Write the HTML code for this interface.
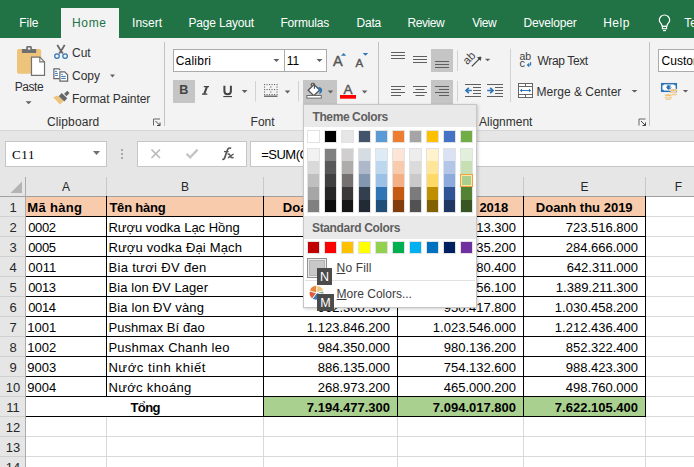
<!DOCTYPE html><html><head><meta charset="utf-8"><style>
*{margin:0;padding:0;box-sizing:border-box}
html,body{width:694px;height:467px;overflow:hidden}
body{position:relative;font-family:"Liberation Sans",sans-serif;background:#fff}
.a{position:absolute}
.t{position:absolute;white-space:nowrap;font-size:12px;line-height:14px;color:#262626}
.c{position:absolute;white-space:nowrap;font-size:13px;line-height:15px;color:#000}
svg{position:absolute;left:0;top:0;overflow:visible}
</style></head><body>

<div class="a" style="left:0px;top:0px;width:694px;height:38px;background:#217346;"></div>
<div class="a" style="left:61px;top:8px;width:58px;height:30px;background:#f3f3f3;"></div>
<div class="t" style="left:19.2px;top:16.0px;color:#fff;letter-spacing:0.00px;">File</div>
<div class="t" style="left:72.1px;top:16.0px;color:#217346;letter-spacing:0.60px;">Home</div>
<div class="t" style="left:132.1px;top:16.0px;color:#fff;letter-spacing:0.00px;">Insert</div>
<div class="t" style="left:188.4px;top:16.0px;color:#fff;letter-spacing:-0.17px;">Page Layout</div>
<div class="t" style="left:280.4px;top:16.0px;color:#fff;letter-spacing:-0.16px;">Formulas</div>
<div class="t" style="left:356.6px;top:16.0px;color:#fff;letter-spacing:-0.27px;">Data</div>
<div class="t" style="left:407.5px;top:16.0px;color:#fff;letter-spacing:-0.44px;">Review</div>
<div class="t" style="left:472.3px;top:16.0px;color:#fff;letter-spacing:-0.50px;">View</div>
<div class="t" style="left:523.5px;top:16.0px;color:#fff;letter-spacing:-0.19px;">Developer</div>
<div class="t" style="left:603.2px;top:16.0px;color:#fff;letter-spacing:0.50px;">Help</div>
<div class="t" style="left:684.2px;top:16.0px;color:#fff;letter-spacing:0.00px;">Tell me</div>
<div class="a" style="left:0px;top:38px;width:694px;height:92px;background:#f3f3f3;"></div>
<div class="a" style="left:0px;top:130px;width:694px;height:1px;background:#d6d6d6;"></div>
<div class="a" style="left:0px;top:131px;width:694px;height:46px;background:#e6e6e6;"></div>
<div class="a" style="left:164px;top:42px;width:1px;height:84px;background:#c2c2c2;"></div>
<div class="a" style="left:378px;top:42px;width:1px;height:84px;background:#c2c2c2;"></div>
<div class="a" style="left:649px;top:42px;width:1px;height:84px;background:#c2c2c2;"></div>
<div class="t" style="left:14.7px;top:80.0px;color:#303030;letter-spacing:-0.42px;">Paste</div>
<div class="t" style="left:72.0px;top:45.5px;color:#303030;letter-spacing:0.00px;">Cut</div>
<div class="t" style="left:72.0px;top:69.0px;color:#303030;letter-spacing:0.00px;">Copy</div>
<div class="t" style="left:71.9px;top:91.5px;color:#303030;letter-spacing:-0.07px;">Format Painter</div>
<div class="t" style="left:47.0px;top:114.5px;color:#303030;letter-spacing:0.11px;">Clipboard</div>
<div class="t" style="left:250.6px;top:114.5px;color:#303030;letter-spacing:0.00px;">Font</div>
<div class="t" style="left:479.1px;top:114.8px;color:#303030;letter-spacing:0.00px;">Alignment</div>
<div class="t" style="left:537.6px;top:53.8px;color:#303030;letter-spacing:-0.38px;">Wrap Text</div>
<div class="t" style="left:536.6px;top:85.0px;color:#303030;letter-spacing:0.00px;">Merge &amp; Center</div>
<div class="a" style="left:173px;top:49px;width:112px;height:23px;background:#fff;border:1px solid #ababab"></div>
<div class="a" style="left:284px;top:49px;width:43px;height:23px;background:#fff;border:1px solid #ababab"></div>
<div class="t" style="left:175.7px;top:53.7px;color:#000;letter-spacing:0.22px;">Calibri</div>
<div class="t" style="left:286.7px;top:53.7px;color:#000;letter-spacing:0.00px;">11</div>
<div class="a" style="left:658px;top:49px;width:60px;height:23px;background:#fff;border:1px solid #ababab"></div>
<div class="t" style="left:661.6px;top:53.7px;color:#000;letter-spacing:0.00px;">Custom</div>
<div class="a" style="left:173px;top:80px;width:22px;height:23px;background:#c5c5c5;"></div>
<div class="a" style="left:303px;top:80px;width:34px;height:24px;background:#c5c5c5;"></div>
<div class="a" style="left:431px;top:49px;width:22px;height:23px;background:#c5c5c5;"></div>
<div class="a" style="left:431px;top:80px;width:22px;height:24px;background:#c5c5c5;"></div>
<div class="a" style="left:179.2px;top:83.6px;font-size:12.6px;line-height:13px;font-weight:700;color:#444">B</div>
<svg width="694" height="467"><path d="M25.6 101.2h6l-3.0 3z" fill="#606060"/><path d="M110.0 74.5h5l-2.5 3z" fill="#606060"/><path d="M273.4 59h6l-3.0 3z" fill="#606060"/><path d="M316.5 59h6l-3.0 3z" fill="#606060"/><path d="M241.7 90.1h5.8l-2.9 2.9z" fill="#606060"/><path d="M284.75 90.5h5.5l-2.75 3z" fill="#606060"/><path d="M327.75 90.5h5.5l-2.75 3z" fill="#606060"/><path d="M361.85 90.5h5.5l-2.75 3z" fill="#606060"/><path d="M484.85 58.7h5.5l-2.75 2.5z" fill="#606060"/><path d="M631.5 90h6l-3.0 2.5z" fill="#606060"/><path d="M682.75 90h5.5l-2.75 2.5z" fill="#606060"/><rect x="17" y="49" width="24.2" height="24.8" rx="1.8" fill="#eec37c"/><rect x="21.9" y="48.9" width="14.3" height="4.2" rx="0.6" fill="#6f6f6f"/><rect x="26.2" y="46" width="5.7" height="4.8" rx="1.4" fill="#6f6f6f"/><rect x="27.9" y="47.6" width="2.4" height="2" fill="#f3f3f3"/><path d="M31.5 57.2 H39.8 L44.5 61.9 V75.3 H31.5 Z" fill="#fff" stroke="#727272" stroke-width="1.2"/><path d="M39.8 57.2 V61.9 H44.5" fill="none" stroke="#727272" stroke-width="1.1"/><path d="M57.3 44.8 Q59 48 62.8 53.6 M64.7 44.8 Q63 48 59.2 53.6" stroke="#666" stroke-width="1.8" fill="none"/><circle cx="57" cy="56.1" r="2.3" fill="none" stroke="#2e75b6" stroke-width="1.2"/><circle cx="65.1" cy="56.1" r="2.3" fill="none" stroke="#2e75b6" stroke-width="1.2"/><path d="M59.5 78.7 H53.9 V68.9 H59 L60.2 70" fill="#fff" stroke="#666" stroke-width="1.2"/><path d="M59.9 71.9 H64.7 L67.6 74.8 V81.1 H59.9 Z" fill="#fff" stroke="#666" stroke-width="1.2"/><path d="M55.1 71.4h1.8 M55.1 73.4h2.8 M55.1 75.4h2.8 M61.2 74.3h1.6 M61.2 76.4h4.6 M61.2 78.4h4.6" stroke="#2e75b6" stroke-width="1"/><path d="M53.1 97.2 L57.6 95.5 L63.8 100.8 L60 104.5 Z" fill="#eec37c"/><path d="M60.2 94.6 L65.8 99.8" stroke="#666" stroke-width="4.3"/><path d="M65.3 95 L68.4 91.9" stroke="#666" stroke-width="3.3"/><path d="M341 55.7 L343.6 53 L346.2 55.7 Z" fill="#2e75b6"/><path d="M362.7 53 H368.2 L365.45 55.7 Z" fill="#2e75b6"/><path d="M207 86.6 L204.2 94.2" stroke="#444" stroke-width="2"/><path d="M203.8 86.6 H209 M202 94.2 H207.3" stroke="#444" stroke-width="1.3"/><path d="M224.4 85.8 V91 Q224.4 94.2 227.65 94.2 Q230.9 94.2 230.9 91 V85.8" fill="none" stroke="#444" stroke-width="2"/><rect x="223.3" y="96" width="8.7" height="1.1" fill="#444"/><path d="M255.5 81 V101.5 M298.5 81 V101.5" stroke="#d2d2d2" stroke-width="1"/><rect x="264" y="84" width="1.1" height="1.1" fill="#666"/><rect x="266.5" y="84" width="1.1" height="1.1" fill="#666"/><rect x="269" y="84" width="1.1" height="1.1" fill="#666"/><rect x="271.5" y="84" width="1.1" height="1.1" fill="#666"/><rect x="274" y="84" width="1.1" height="1.1" fill="#666"/><rect x="276.5" y="84" width="1.1" height="1.1" fill="#666"/><rect x="264" y="86.5" width="1.1" height="1.1" fill="#666"/><rect x="270.2" y="86.5" width="1.1" height="1.1" fill="#666"/><rect x="276.5" y="86.5" width="1.1" height="1.1" fill="#666"/><rect x="264" y="89" width="1.1" height="1.1" fill="#666"/><rect x="266.5" y="89" width="1.1" height="1.1" fill="#666"/><rect x="269" y="89" width="1.1" height="1.1" fill="#666"/><rect x="271.5" y="89" width="1.1" height="1.1" fill="#666"/><rect x="274" y="89" width="1.1" height="1.1" fill="#666"/><rect x="276.5" y="89" width="1.1" height="1.1" fill="#666"/><rect x="264" y="91.5" width="1.1" height="1.1" fill="#666"/><rect x="270.2" y="91.5" width="1.1" height="1.1" fill="#666"/><rect x="276.5" y="91.5" width="1.1" height="1.1" fill="#666"/><rect x="264" y="94" width="1.1" height="1.1" fill="#666"/><rect x="266.5" y="94" width="1.1" height="1.1" fill="#666"/><rect x="269" y="94" width="1.1" height="1.1" fill="#666"/><rect x="271.5" y="94" width="1.1" height="1.1" fill="#666"/><rect x="274" y="94" width="1.1" height="1.1" fill="#666"/><rect x="276.5" y="94" width="1.1" height="1.1" fill="#666"/><rect x="264" y="95.6" width="13.5" height="1.2" fill="#505050"/><path d="M308.2 90.2 L314 84.6 L319.7 90 L313.8 95.6 Z" fill="#fff" stroke="#505050" stroke-width="1.3"/><path d="M311.3 86 V84.2 Q311.3 83.2 312.3 83.2 H313.4 Q314.4 83.2 314.4 84.2 V88.8" fill="none" stroke="#505050" stroke-width="1.1"/><path d="M318.3 87.1 Q322.6 87.4 322.1 91 Q321.6 93.2 319 94.4 Q320.2 91.2 318.6 89.6 Z" fill="#2e75b6"/><rect x="306.9" y="95.5" width="14.4" height="2.6" fill="#fff" stroke="#6a6a6a" stroke-width="1"/><rect x="340" y="95" width="16" height="3.7" fill="#ff0000"/><path d="M391 52.5 H405" stroke="#5e5e5e" stroke-width="1"/><path d="M391 55.5 H405" stroke="#5e5e5e" stroke-width="1"/><path d="M391 58.5 H405" stroke="#5e5e5e" stroke-width="1"/><path d="M413 56.5 H427" stroke="#5e5e5e" stroke-width="1"/><path d="M413 59.5 H427" stroke="#5e5e5e" stroke-width="1"/><path d="M413 62.5 H427" stroke="#5e5e5e" stroke-width="1"/><path d="M435 61.5 H449" stroke="#5e5e5e" stroke-width="1"/><path d="M435 64.5 H449" stroke="#5e5e5e" stroke-width="1"/><path d="M435 67.5 H449" stroke="#5e5e5e" stroke-width="1"/><path d="M391 86.5 H405" stroke="#5e5e5e" stroke-width="1"/><path d="M391 89.5 H401" stroke="#5e5e5e" stroke-width="1"/><path d="M391 92.5 H405" stroke="#5e5e5e" stroke-width="1"/><path d="M391 95.5 H401" stroke="#5e5e5e" stroke-width="1"/><path d="M413 86.5 H427" stroke="#5e5e5e" stroke-width="1"/><path d="M415.5 89.5 H424.5" stroke="#5e5e5e" stroke-width="1"/><path d="M413 92.5 H427" stroke="#5e5e5e" stroke-width="1"/><path d="M415.5 95.5 H424.5" stroke="#5e5e5e" stroke-width="1"/><path d="M435 86.5 H449" stroke="#5e5e5e" stroke-width="1"/><path d="M439 89.5 H449" stroke="#5e5e5e" stroke-width="1"/><path d="M435 92.5 H449" stroke="#5e5e5e" stroke-width="1"/><path d="M439 95.5 H449" stroke="#5e5e5e" stroke-width="1"/><path d="M457.5 50.5 V71 M457.5 81 V101.5" stroke="#d2d2d2" stroke-width="1"/><g transform="translate(467.2 65.2) rotate(-45)"><text x="0" y="0" font-family="Liberation Sans" font-size="11.5" fill="#444">ab</text></g><path d="M471.8 66.3 L480.3 57.8" stroke="#444" stroke-width="1.2" fill="none"/><path d="M481 57 L477.6 57.6 L480.4 60.4 Z" fill="#444" stroke="#444" stroke-width="0.8"/><rect x="465" y="84" width="16" height="1" fill="#5e5e5e"/><rect x="465" y="96" width="16" height="1" fill="#5e5e5e"/><rect x="473" y="87" width="8" height="1" fill="#5e5e5e"/><rect x="473" y="90" width="8" height="1" fill="#5e5e5e"/><rect x="473" y="93" width="8" height="1" fill="#5e5e5e"/><rect x="487" y="84" width="16" height="1" fill="#5e5e5e"/><rect x="487" y="96" width="16" height="1" fill="#5e5e5e"/><rect x="495" y="87" width="8" height="1" fill="#5e5e5e"/><rect x="495" y="90" width="8" height="1" fill="#5e5e5e"/><rect x="495" y="93" width="8" height="1" fill="#5e5e5e"/><path d="M471.8 90.5 H466.5 M468.8 87.8 L466 90.5 L468.8 93.2" stroke="#2e75b6" stroke-width="1.7" fill="none"/><path d="M487.2 90.5 H492.6 M490.2 87.8 L493 90.5 L490.2 93.2" stroke="#2e75b6" stroke-width="1.7" fill="none"/><path d="M510.5 48.5 V102" stroke="#d2d2d2" stroke-width="1"/><text x="519.6" y="59.6" font-family="Liberation Sans" font-size="10.5" letter-spacing="-0.3" fill="#404040">ab</text><text x="519.6" y="67" font-family="Liberation Sans" font-size="11" fill="#404040">c</text><path d="M530.6 62 V65 H527.8 M529.2 63.4 L527.5 65 L529.2 66.6" stroke="#2e75b6" stroke-width="1.1" fill="none"/><rect x="518.5" y="83.5" width="14" height="14" fill="#fff" stroke="#666"/><path d="M518.5 86.5 H532.5 M518.5 94.5 H532.5 M525.5 83.5 V86.5 M525.5 94.5 V97.5" stroke="#666"/><path d="M520.5 90.5 H530.5 M522 89 L520.3 90.5 L522 92 M529 89 L530.7 90.5 L529 92" stroke="#2e75b6" stroke-width="1" fill="none"/><path d="M153.5 125.5 V119.0 H160" stroke="#666" fill="none"/><path d="M155.5 121.0 L160 125.5 M160 122.5 V125.5 H157" stroke="#444" fill="none"/><path d="M639.0 125.5 V119.0 H645.5" stroke="#666" fill="none"/><path d="M641.0 121.0 L645.5 125.5 M645.5 122.5 V125.5 H642.5" stroke="#444" fill="none"/><rect x="661.7" y="83.7" width="14.6" height="7.6" fill="#fff" stroke="#2e75b6" stroke-width="1.5"/><path d="M661 83 h2.8 v2.3 h-2.8z M674.2 83 h2.8 v2.3 h-2.8z M661 89.7 h2.8 v2.3 h-2.8z" fill="#2e75b6"/><circle cx="668.9" cy="87.3" r="2.4" fill="#2e75b6"/><path d="M669.6 85.6 Q671 86.6 670.2 88.2" stroke="#fff" stroke-width="0.7" fill="none"/><ellipse cx="673.5" cy="90.2" rx="3.8" ry="1.5" fill="#eec37c" stroke="#f3f3f3" stroke-width="0.7"/><path d="M670 92.4 Q673.5 93.6 677 92.4 M671 94.4 Q674 95.6 677 94.4" stroke="#eec37c" stroke-width="1" fill="none"/><ellipse cx="668.3" cy="95.2" rx="3.8" ry="1.5" fill="#eec37c" stroke="#f3f3f3" stroke-width="0.7"/><path d="M664.8 97.4 Q668.3 98.6 671.8 97.4 M665.5 99 Q668.3 100 671.2 99" stroke="#eec37c" stroke-width="1" fill="none"/><path d="M662.3 26.3 L661.3 23.9 Q659.3 22 659.3 20.2 A5.2 5.2 0 0 1 669.7 20.2 Q669.7 22 667.7 23.9 L666.7 26.3 Z" fill="none" stroke="#fff" stroke-width="1.2"/><rect x="662.4" y="26.4" width="4.2" height="2.3" fill="none" stroke="#fff" stroke-width="1.1"/><path d="M663 30.6 H666" stroke="#fff" stroke-width="1.1"/></svg>
<div class="a" style="left:333px;top:53px;font-size:14.5px;line-height:16px;color:#555;-webkit-text-stroke:0.4px #555">A</div>
<div class="a" style="left:355.5px;top:57px;font-size:11.5px;line-height:13px;color:#555;-webkit-text-stroke:0.4px #555">A</div>
<div class="a" style="left:343.5px;top:82px;font-size:13.5px;line-height:15px;color:#555;-webkit-text-stroke:0.4px #555">A</div>
<div class="a" style="left:5px;top:141px;width:102px;height:26px;background:#fff;border:1px solid #c6c6c6"></div>
<div class="a" style="left:12px;top:147px;font-family:'Liberation Serif';font-size:13px;letter-spacing:0.6px;line-height:15px;color:#000;white-space:nowrap">C11</div>
<div class="a" style="left:137px;top:141px;width:110px;height:26px;background:#fff;border:1px solid #c6c6c6"></div>
<div class="a" style="left:250px;top:141px;width:460px;height:26px;background:#fff;border:1px solid #c6c6c6"></div>
<svg width="694" height="467"><path d="M93 151 H100 L96.5 155 Z" fill="#6f6f6f"/><rect x="121" y="149" width="2" height="2" fill="#a8a8a8"/><rect x="121" y="153" width="2" height="2" fill="#a8a8a8"/><rect x="121" y="157" width="2" height="2" fill="#a8a8a8"/><path d="M151.5 149.5 L160 158 M160 149.5 L151.5 158" stroke="#b8b8b8" stroke-width="1.6"/><path d="M186.5 153.8 L190.2 157.4 L197.6 149.6" stroke="#c4c4c4" stroke-width="2.3" fill="none"/></svg>
<svg width="694" height="467"><path d="M222.3 159.2 Q224.3 160 225.3 156 L227.3 150.2 Q228.3 147.2 231.2 148.3" stroke="#555" stroke-width="1.7" fill="none"/><path d="M224 151.6 H228.6" stroke="#555" stroke-width="1.3"/><path d="M227.6 154.3 Q229 153.4 229.8 154.8 L230.8 157 Q231.8 158.3 233.6 157.4 M233.6 154 L228 157.8" stroke="#555" stroke-width="1.4" fill="none"/></svg>
<div class="c" style="left:261.2px;top:146.6px;color:#000;letter-spacing:-0.5px">=SUM(C2:C10)</div>
<div class="a" style="left:0px;top:177px;width:694px;height:20px;background:#e6e6e6;"></div>
<div class="a" style="left:0px;top:196px;width:694px;height:1px;background:#a0a0a0;"></div>
<div class="a" style="left:0px;top:197px;width:25px;height:270px;background:#e6e6e6;"></div>
<div class="a" style="left:25px;top:177px;width:1px;height:290px;background:#ababab;"></div>
<div class="a" style="left:106px;top:177px;width:1px;height:19px;background:#c8c8c8;"></div>
<div class="a" style="left:263px;top:177px;width:1px;height:19px;background:#c8c8c8;"></div>
<div class="a" style="left:397px;top:177px;width:1px;height:19px;background:#c8c8c8;"></div>
<div class="a" style="left:523px;top:177px;width:1px;height:19px;background:#c8c8c8;"></div>
<div class="a" style="left:645px;top:177px;width:1px;height:19px;background:#c8c8c8;"></div>
<svg width="694" height="467"><path d="M10.5 193 L22 181.5 V193 Z" fill="#b4b4b4"/></svg>
<div class="t" style="left:36.0px;width:60px;text-align:center;top:180px;font-size:12px;color:#262626">A</div>
<div class="t" style="left:155.0px;width:60px;text-align:center;top:180px;font-size:12px;color:#262626">B</div>
<div class="t" style="left:300.5px;width:60px;text-align:center;top:180px;font-size:12px;color:#262626">C</div>
<div class="t" style="left:430.5px;width:60px;text-align:center;top:180px;font-size:12px;color:#262626">D</div>
<div class="t" style="left:554.5px;width:60px;text-align:center;top:180px;font-size:12px;color:#262626">E</div>
<div class="t" style="left:648.5px;width:60px;text-align:center;top:180px;font-size:12px;color:#262626">F</div>
<div class="a" style="left:0px;top:216px;width:25px;height:1px;background:#d0d0d0;"></div>
<div class="c" style="left:0;width:26px;text-align:center;top:200px;color:#262626">1</div>
<div class="a" style="left:0px;top:236px;width:25px;height:1px;background:#d0d0d0;"></div>
<div class="c" style="left:0;width:26px;text-align:center;top:220px;color:#262626">2</div>
<div class="a" style="left:0px;top:256px;width:25px;height:1px;background:#d0d0d0;"></div>
<div class="c" style="left:0;width:26px;text-align:center;top:240px;color:#262626">3</div>
<div class="a" style="left:0px;top:276px;width:25px;height:1px;background:#d0d0d0;"></div>
<div class="c" style="left:0;width:26px;text-align:center;top:260px;color:#262626">4</div>
<div class="a" style="left:0px;top:296px;width:25px;height:1px;background:#d0d0d0;"></div>
<div class="c" style="left:0;width:26px;text-align:center;top:280px;color:#262626">5</div>
<div class="a" style="left:0px;top:316px;width:25px;height:1px;background:#d0d0d0;"></div>
<div class="c" style="left:0;width:26px;text-align:center;top:300px;color:#262626">6</div>
<div class="a" style="left:0px;top:336px;width:25px;height:1px;background:#d0d0d0;"></div>
<div class="c" style="left:0;width:26px;text-align:center;top:320px;color:#262626">7</div>
<div class="a" style="left:0px;top:356px;width:25px;height:1px;background:#d0d0d0;"></div>
<div class="c" style="left:0;width:26px;text-align:center;top:340px;color:#262626">8</div>
<div class="a" style="left:0px;top:376px;width:25px;height:1px;background:#d0d0d0;"></div>
<div class="c" style="left:0;width:26px;text-align:center;top:360px;color:#262626">9</div>
<div class="a" style="left:0px;top:396px;width:25px;height:1px;background:#d0d0d0;"></div>
<div class="c" style="left:0;width:26px;text-align:center;top:380px;color:#262626">10</div>
<div class="a" style="left:0px;top:416px;width:25px;height:1px;background:#d0d0d0;"></div>
<div class="c" style="left:0;width:26px;text-align:center;top:400px;color:#262626">11</div>
<div class="a" style="left:0px;top:436px;width:25px;height:1px;background:#d0d0d0;"></div>
<div class="c" style="left:0;width:26px;text-align:center;top:420px;color:#262626">12</div>
<div class="a" style="left:0px;top:456px;width:25px;height:1px;background:#d0d0d0;"></div>
<div class="c" style="left:0;width:26px;text-align:center;top:440px;color:#262626">13</div>
<div class="a" style="left:0px;top:476px;width:25px;height:1px;background:#d0d0d0;"></div>
<div class="c" style="left:0;width:26px;text-align:center;top:460px;color:#262626">14</div>
<div class="a" style="left:26px;top:197px;width:619px;height:19px;background:#f8cbad;"></div>
<div class="a" style="left:264px;top:397px;width:381px;height:19px;background:#a9d08e;"></div>
<div class="a" style="left:106px;top:417px;width:1px;height:50px;background:#d9d9d9;"></div>
<div class="a" style="left:263px;top:417px;width:1px;height:50px;background:#d9d9d9;"></div>
<div class="a" style="left:397px;top:417px;width:1px;height:50px;background:#d9d9d9;"></div>
<div class="a" style="left:523px;top:417px;width:1px;height:50px;background:#d9d9d9;"></div>
<div class="a" style="left:645px;top:417px;width:1px;height:50px;background:#d9d9d9;"></div>
<div class="a" style="left:646px;top:216px;width:48px;height:1px;background:#d9d9d9;"></div>
<div class="a" style="left:646px;top:236px;width:48px;height:1px;background:#d9d9d9;"></div>
<div class="a" style="left:646px;top:256px;width:48px;height:1px;background:#d9d9d9;"></div>
<div class="a" style="left:646px;top:276px;width:48px;height:1px;background:#d9d9d9;"></div>
<div class="a" style="left:646px;top:296px;width:48px;height:1px;background:#d9d9d9;"></div>
<div class="a" style="left:646px;top:316px;width:48px;height:1px;background:#d9d9d9;"></div>
<div class="a" style="left:646px;top:336px;width:48px;height:1px;background:#d9d9d9;"></div>
<div class="a" style="left:646px;top:356px;width:48px;height:1px;background:#d9d9d9;"></div>
<div class="a" style="left:646px;top:376px;width:48px;height:1px;background:#d9d9d9;"></div>
<div class="a" style="left:646px;top:396px;width:48px;height:1px;background:#d9d9d9;"></div>
<div class="a" style="left:646px;top:416px;width:48px;height:1px;background:#d9d9d9;"></div>
<div class="a" style="left:26px;top:436px;width:668px;height:1px;background:#d9d9d9;"></div>
<div class="a" style="left:26px;top:456px;width:668px;height:1px;background:#d9d9d9;"></div>
<div class="a" style="left:26px;top:216px;width:620px;height:1px;background:#000;"></div>
<div class="a" style="left:26px;top:236px;width:620px;height:1px;background:#000;"></div>
<div class="a" style="left:26px;top:256px;width:620px;height:1px;background:#000;"></div>
<div class="a" style="left:26px;top:276px;width:620px;height:1px;background:#000;"></div>
<div class="a" style="left:26px;top:296px;width:620px;height:1px;background:#000;"></div>
<div class="a" style="left:26px;top:316px;width:620px;height:1px;background:#000;"></div>
<div class="a" style="left:26px;top:336px;width:620px;height:1px;background:#000;"></div>
<div class="a" style="left:26px;top:356px;width:620px;height:1px;background:#000;"></div>
<div class="a" style="left:26px;top:376px;width:620px;height:1px;background:#000;"></div>
<div class="a" style="left:26px;top:396px;width:620px;height:1px;background:#000;"></div>
<div class="a" style="left:26px;top:416px;width:620px;height:1px;background:#000;"></div>
<div class="a" style="left:106px;top:196px;width:1px;height:200px;background:#000;"></div>
<div class="a" style="left:263px;top:196px;width:1px;height:221px;background:#000;"></div>
<div class="a" style="left:397px;top:196px;width:1px;height:221px;background:#000;"></div>
<div class="a" style="left:523px;top:196px;width:1px;height:221px;background:#000;"></div>
<div class="a" style="left:645px;top:196px;width:1px;height:221px;background:#000;"></div>
<div class="t" style="left:27.3px;top:200.0px;color:#000;letter-spacing:0.33px;font-size:13px;line-height:15px;font-weight:700">Mã hàng</div>
<div class="t" style="left:109.4px;top:200.0px;color:#000;letter-spacing:-0.21px;font-size:13px;line-height:15px;font-weight:700">Tên hàng</div>
<div class="t" style="left:282.8px;top:200.0px;color:#000;letter-spacing:0.00px;font-size:13px;line-height:15px;font-weight:700">Doanh thu 2017</div>
<div class="t" style="left:411.5px;top:200.0px;color:#000;letter-spacing:0.00px;font-size:13px;line-height:15px;font-weight:700">Doanh thu 2018</div>
<div class="t" style="left:535.8px;top:200.0px;color:#000;letter-spacing:0.00px;font-size:13px;line-height:15px;font-weight:700">Doanh thu 2019</div>
<div class="t" style="left:28.3px;top:220.0px;color:#000;letter-spacing:-0.43px;font-size:13px;line-height:15px;">0002</div>
<div class="t" style="left:108.4px;top:220.0px;color:#000;letter-spacing:0.00px;font-size:13px;line-height:15px;">Rượu vodka Lạc Hồng</div>
<div class="c" style="left:247px;width:143px;text-align:right;top:220px">725.250.000</div>
<div class="c" style="left:373px;width:143px;text-align:right;top:220px">693.413.300</div>
<div class="c" style="left:495px;width:143px;text-align:right;top:220px">723.516.800</div>
<div class="t" style="left:28.3px;top:240.0px;color:#000;letter-spacing:-0.43px;font-size:13px;line-height:15px;">0005</div>
<div class="t" style="left:108.4px;top:240.0px;color:#000;letter-spacing:0.16px;font-size:13px;line-height:15px;">Rượu vodka Đại Mạch</div>
<div class="c" style="left:247px;width:143px;text-align:right;top:240px">265.840.300</div>
<div class="c" style="left:373px;width:143px;text-align:right;top:240px">278.635.200</div>
<div class="c" style="left:495px;width:143px;text-align:right;top:240px">284.666.000</div>
<div class="t" style="left:28.3px;top:260.0px;color:#000;letter-spacing:0.00px;font-size:13px;line-height:15px;">0011</div>
<div class="t" style="left:108.4px;top:260.0px;color:#000;letter-spacing:0.34px;font-size:13px;line-height:15px;">Bia tươi ĐV đen</div>
<div class="c" style="left:247px;width:143px;text-align:right;top:260px">598.230.400</div>
<div class="c" style="left:373px;width:143px;text-align:right;top:260px">612.180.400</div>
<div class="c" style="left:495px;width:143px;text-align:right;top:260px">642.311.000</div>
<div class="t" style="left:28.3px;top:280.0px;color:#000;letter-spacing:-0.43px;font-size:13px;line-height:15px;">0013</div>
<div class="t" style="left:108.4px;top:280.0px;color:#000;letter-spacing:0.09px;font-size:13px;line-height:15px;">Bia lon ĐV Lager</div>
<div class="c" style="left:247px;width:143px;text-align:right;top:280px">1.205.463.900</div>
<div class="c" style="left:373px;width:143px;text-align:right;top:280px">1.267.256.100</div>
<div class="c" style="left:495px;width:143px;text-align:right;top:280px">1.389.211.300</div>
<div class="t" style="left:28.3px;top:300.0px;color:#000;letter-spacing:-0.43px;font-size:13px;line-height:15px;">0014</div>
<div class="t" style="left:108.4px;top:300.0px;color:#000;letter-spacing:0.17px;font-size:13px;line-height:15px;">Bia lon ĐV vàng</div>
<div class="c" style="left:247px;width:143px;text-align:right;top:300px">962.300.300</div>
<div class="c" style="left:373px;width:143px;text-align:right;top:300px">950.417.800</div>
<div class="c" style="left:495px;width:143px;text-align:right;top:300px">1.030.458.200</div>
<div class="t" style="left:27.3px;top:320.0px;color:#000;letter-spacing:0.00px;font-size:13px;line-height:15px;">1001</div>
<div class="t" style="left:108.4px;top:320.0px;color:#000;letter-spacing:0.08px;font-size:13px;line-height:15px;">Pushmax Bí đao</div>
<div class="c" style="left:247px;width:143px;text-align:right;top:320px">1.123.846.200</div>
<div class="c" style="left:373px;width:143px;text-align:right;top:320px">1.023.546.000</div>
<div class="c" style="left:495px;width:143px;text-align:right;top:320px">1.212.436.400</div>
<div class="t" style="left:27.3px;top:340.0px;color:#000;letter-spacing:0.00px;font-size:13px;line-height:15px;">1002</div>
<div class="t" style="left:108.4px;top:340.0px;color:#000;letter-spacing:0.25px;font-size:13px;line-height:15px;">Pushmax Chanh leo</div>
<div class="c" style="left:247px;width:143px;text-align:right;top:340px">984.350.000</div>
<div class="c" style="left:373px;width:143px;text-align:right;top:340px">980.136.200</div>
<div class="c" style="left:495px;width:143px;text-align:right;top:340px">852.322.400</div>
<div class="t" style="left:27.3px;top:360.0px;color:#000;letter-spacing:0.00px;font-size:13px;line-height:15px;">9003</div>
<div class="t" style="left:108.4px;top:360.0px;color:#000;letter-spacing:0.59px;font-size:13px;line-height:15px;">Nước tinh khiết</div>
<div class="c" style="left:247px;width:143px;text-align:right;top:360px">886.135.000</div>
<div class="c" style="left:373px;width:143px;text-align:right;top:360px">754.132.600</div>
<div class="c" style="left:495px;width:143px;text-align:right;top:360px">988.423.300</div>
<div class="t" style="left:27.3px;top:380.0px;color:#000;letter-spacing:0.00px;font-size:13px;line-height:15px;">9004</div>
<div class="t" style="left:108.4px;top:380.0px;color:#000;letter-spacing:0.35px;font-size:13px;line-height:15px;">Nước khoáng</div>
<div class="c" style="left:247px;width:143px;text-align:right;top:380px">268.973.200</div>
<div class="c" style="left:373px;width:143px;text-align:right;top:380px">465.000.200</div>
<div class="c" style="left:495px;width:143px;text-align:right;top:380px">498.760.000</div>
<div class="t" style="left:130.4px;top:400.0px;color:#000;letter-spacing:-0.53px;font-size:13px;line-height:15px;font-weight:700">Tổng</div>
<div class="c" style="left:247px;width:143px;text-align:right;top:400px;font-weight:700">7.194.477.300</div>
<div class="c" style="left:373px;width:143px;text-align:right;top:400px;font-weight:700">7.094.017.800</div>
<div class="c" style="left:495px;width:143px;text-align:right;top:400px;font-weight:700">7.622.105.400</div>
<div class="a" style="left:303px;top:104px;width:174px;height:204px;background:#fff;border:1px solid #c6c6c6;box-shadow:1px 1px 3px rgba(0,0,0,0.2)"></div>
<div class="a" style="left:304px;top:105px;width:172px;height:22px;background:#e9e9e9;"></div>
<div class="t" style="left:312.5px;top:110px;font-size:12px;letter-spacing:-0.4px;font-weight:700;color:#5f5f5f">Theme Colors</div>
<div class="a" style="left:307px;top:130px;width:13px;height:13px;background:#FFFFFF;border:1px solid #e2e2e2"></div>
<div class="a" style="left:307px;top:148px;width:13px;height:65px;border:1px solid #e2e2e2;background:#e2e2e2"></div>
<div class="a" style="left:308px;top:149px;width:11px;height:12px;background:#F2F2F2"></div>
<div class="a" style="left:308px;top:161px;width:11px;height:13px;background:#D9D9D9"></div>
<div class="a" style="left:308px;top:174px;width:11px;height:13px;background:#BFBFBF"></div>
<div class="a" style="left:308px;top:187px;width:11px;height:13px;background:#A6A6A6"></div>
<div class="a" style="left:308px;top:200px;width:11px;height:12px;background:#808080"></div>
<div class="a" style="left:324px;top:130px;width:13px;height:13px;background:#000000;border:1px solid #e2e2e2"></div>
<div class="a" style="left:324px;top:148px;width:13px;height:65px;border:1px solid #e2e2e2;background:#e2e2e2"></div>
<div class="a" style="left:325px;top:149px;width:11px;height:12px;background:#808080"></div>
<div class="a" style="left:325px;top:161px;width:11px;height:13px;background:#595959"></div>
<div class="a" style="left:325px;top:174px;width:11px;height:13px;background:#404040"></div>
<div class="a" style="left:325px;top:187px;width:11px;height:13px;background:#262626"></div>
<div class="a" style="left:325px;top:200px;width:11px;height:12px;background:#0D0D0D"></div>
<div class="a" style="left:341px;top:130px;width:13px;height:13px;background:#E7E6E6;border:1px solid #e2e2e2"></div>
<div class="a" style="left:341px;top:148px;width:13px;height:65px;border:1px solid #e2e2e2;background:#e2e2e2"></div>
<div class="a" style="left:342px;top:149px;width:11px;height:12px;background:#D0CECE"></div>
<div class="a" style="left:342px;top:161px;width:11px;height:13px;background:#AEABAB"></div>
<div class="a" style="left:342px;top:174px;width:11px;height:13px;background:#757171"></div>
<div class="a" style="left:342px;top:187px;width:11px;height:13px;background:#3A3838"></div>
<div class="a" style="left:342px;top:200px;width:11px;height:12px;background:#171616"></div>
<div class="a" style="left:358px;top:130px;width:13px;height:13px;background:#44546A;border:1px solid #e2e2e2"></div>
<div class="a" style="left:358px;top:148px;width:13px;height:65px;border:1px solid #e2e2e2;background:#e2e2e2"></div>
<div class="a" style="left:359px;top:149px;width:11px;height:12px;background:#D6DCE4"></div>
<div class="a" style="left:359px;top:161px;width:11px;height:13px;background:#ADB9CA"></div>
<div class="a" style="left:359px;top:174px;width:11px;height:13px;background:#8497B0"></div>
<div class="a" style="left:359px;top:187px;width:11px;height:13px;background:#333F4F"></div>
<div class="a" style="left:359px;top:200px;width:11px;height:12px;background:#222B35"></div>
<div class="a" style="left:375px;top:130px;width:13px;height:13px;background:#5B9BD5;border:1px solid #e2e2e2"></div>
<div class="a" style="left:375px;top:148px;width:13px;height:65px;border:1px solid #e2e2e2;background:#e2e2e2"></div>
<div class="a" style="left:376px;top:149px;width:11px;height:12px;background:#DDEBF7"></div>
<div class="a" style="left:376px;top:161px;width:11px;height:13px;background:#BDD7EE"></div>
<div class="a" style="left:376px;top:174px;width:11px;height:13px;background:#9BC2E6"></div>
<div class="a" style="left:376px;top:187px;width:11px;height:13px;background:#2F75B5"></div>
<div class="a" style="left:376px;top:200px;width:11px;height:12px;background:#1F4E78"></div>
<div class="a" style="left:392px;top:130px;width:13px;height:13px;background:#ED7D31;border:1px solid #e2e2e2"></div>
<div class="a" style="left:392px;top:148px;width:13px;height:65px;border:1px solid #e2e2e2;background:#e2e2e2"></div>
<div class="a" style="left:393px;top:149px;width:11px;height:12px;background:#FCE4D6"></div>
<div class="a" style="left:393px;top:161px;width:11px;height:13px;background:#F8CBAD"></div>
<div class="a" style="left:393px;top:174px;width:11px;height:13px;background:#F4B084"></div>
<div class="a" style="left:393px;top:187px;width:11px;height:13px;background:#C65911"></div>
<div class="a" style="left:393px;top:200px;width:11px;height:12px;background:#833C0C"></div>
<div class="a" style="left:409px;top:130px;width:13px;height:13px;background:#A5A5A5;border:1px solid #e2e2e2"></div>
<div class="a" style="left:409px;top:148px;width:13px;height:65px;border:1px solid #e2e2e2;background:#e2e2e2"></div>
<div class="a" style="left:410px;top:149px;width:11px;height:12px;background:#EDEDED"></div>
<div class="a" style="left:410px;top:161px;width:11px;height:13px;background:#DBDBDB"></div>
<div class="a" style="left:410px;top:174px;width:11px;height:13px;background:#C9C9C9"></div>
<div class="a" style="left:410px;top:187px;width:11px;height:13px;background:#7B7B7B"></div>
<div class="a" style="left:410px;top:200px;width:11px;height:12px;background:#525252"></div>
<div class="a" style="left:426px;top:130px;width:13px;height:13px;background:#FFC000;border:1px solid #e2e2e2"></div>
<div class="a" style="left:426px;top:148px;width:13px;height:65px;border:1px solid #e2e2e2;background:#e2e2e2"></div>
<div class="a" style="left:427px;top:149px;width:11px;height:12px;background:#FFF2CC"></div>
<div class="a" style="left:427px;top:161px;width:11px;height:13px;background:#FFE699"></div>
<div class="a" style="left:427px;top:174px;width:11px;height:13px;background:#FFD966"></div>
<div class="a" style="left:427px;top:187px;width:11px;height:13px;background:#BF8F00"></div>
<div class="a" style="left:427px;top:200px;width:11px;height:12px;background:#806000"></div>
<div class="a" style="left:443px;top:130px;width:13px;height:13px;background:#4472C4;border:1px solid #e2e2e2"></div>
<div class="a" style="left:443px;top:148px;width:13px;height:65px;border:1px solid #e2e2e2;background:#e2e2e2"></div>
<div class="a" style="left:444px;top:149px;width:11px;height:12px;background:#D9E1F2"></div>
<div class="a" style="left:444px;top:161px;width:11px;height:13px;background:#B4C6E7"></div>
<div class="a" style="left:444px;top:174px;width:11px;height:13px;background:#8EA9DB"></div>
<div class="a" style="left:444px;top:187px;width:11px;height:13px;background:#305496"></div>
<div class="a" style="left:444px;top:200px;width:11px;height:12px;background:#203764"></div>
<div class="a" style="left:460px;top:130px;width:13px;height:13px;background:#70AD47;border:1px solid #e2e2e2"></div>
<div class="a" style="left:460px;top:148px;width:13px;height:65px;border:1px solid #e2e2e2;background:#e2e2e2"></div>
<div class="a" style="left:461px;top:149px;width:11px;height:12px;background:#E2EFDA"></div>
<div class="a" style="left:461px;top:161px;width:11px;height:13px;background:#C6E0B4"></div>
<div class="a" style="left:461px;top:174px;width:11px;height:13px;background:#A9D08E"></div>
<div class="a" style="left:461px;top:187px;width:11px;height:13px;background:#548235"></div>
<div class="a" style="left:461px;top:200px;width:11px;height:12px;background:#375623"></div>
<div class="a" style="left:460px;top:174px;width:13px;height:13px;border:1px solid #f0a040;background:#a9d08e;box-shadow:inset 0 0 0 1px #fde8a8"></div>
<div class="a" style="left:304px;top:216px;width:172px;height:23px;background:#e9e9e9;"></div>
<div class="t" style="left:312px;top:221px;font-size:12px;letter-spacing:-0.35px;font-weight:700;color:#5f5f5f">Standard Colors</div>
<div class="a" style="left:307px;top:241px;width:13px;height:13px;background:#C00000;border:1px solid #e2e2e2"></div>
<div class="a" style="left:324px;top:241px;width:13px;height:13px;background:#FF0000;border:1px solid #e2e2e2"></div>
<div class="a" style="left:341px;top:241px;width:13px;height:13px;background:#FFC000;border:1px solid #e2e2e2"></div>
<div class="a" style="left:358px;top:241px;width:13px;height:13px;background:#FFFF00;border:1px solid #e2e2e2"></div>
<div class="a" style="left:375px;top:241px;width:13px;height:13px;background:#92D050;border:1px solid #e2e2e2"></div>
<div class="a" style="left:392px;top:241px;width:13px;height:13px;background:#00B050;border:1px solid #e2e2e2"></div>
<div class="a" style="left:409px;top:241px;width:13px;height:13px;background:#00B0F0;border:1px solid #e2e2e2"></div>
<div class="a" style="left:426px;top:241px;width:13px;height:13px;background:#0070C0;border:1px solid #e2e2e2"></div>
<div class="a" style="left:443px;top:241px;width:13px;height:13px;background:#002060;border:1px solid #e2e2e2"></div>
<div class="a" style="left:460px;top:241px;width:13px;height:13px;background:#7030A0;border:1px solid #e2e2e2"></div>
<div class="a" style="left:307px;top:258px;width:20px;height:20px;border:1px solid #8f8f8f;background:#ececec"></div>
<div class="a" style="left:309px;top:260px;width:16px;height:16px;border:1px solid #b4b4b4;background:#c8c8c8"></div>
<div class="t" style="left:336.6px;top:261.2px;color:#3c3c3c;letter-spacing:0.15px;"><u>N</u>o Fill</div>
<div class="a" style="left:305px;top:280px;width:170px;height:1px;background:#e1e1e1;"></div>
<svg width="694" height="467"><path d="M316.5 292.8 L316.75 285.50 A7.3 7.3 0 0 1 323.55 290.91 Z" fill="#f0c47a" stroke="#fff" stroke-width="0.8"/><path d="M316.5 292.8 L323.55 290.91 A7.3 7.3 0 0 1 323.64 294.32 Z" fill="#76a68f" stroke="#fff" stroke-width="0.8"/><path d="M316.5 292.8 L323.64 294.32 A7.3 7.3 0 0 1 312.31 298.78 Z" fill="#3b7dc4" stroke="#fff" stroke-width="0.8"/><path d="M316.5 292.8 L312.31 298.78 A7.3 7.3 0 0 1 309.45 290.91 Z" fill="#de5e3a" stroke="#fff" stroke-width="0.8"/><path d="M316.5 292.8 L309.45 290.91 A7.3 7.3 0 0 1 316.75 285.50 Z" fill="#e8873a" stroke="#fff" stroke-width="0.8"/></svg>
<div class="t" style="left:336.6px;top:287.2px;color:#3c3c3c;letter-spacing:0.00px;"><u>M</u>ore Colors...</div>
<div class="a" style="left:317px;top:268px;width:15px;height:17px;background:#4b4b4b;color:#fff;font-size:12.5px;line-height:19px;text-align:center">N</div>
<div class="a" style="left:317px;top:294px;width:17px;height:17px;background:#4b4b4b;color:#fff;font-size:12.5px;line-height:18px;text-align:center">M</div>
</body></html>
